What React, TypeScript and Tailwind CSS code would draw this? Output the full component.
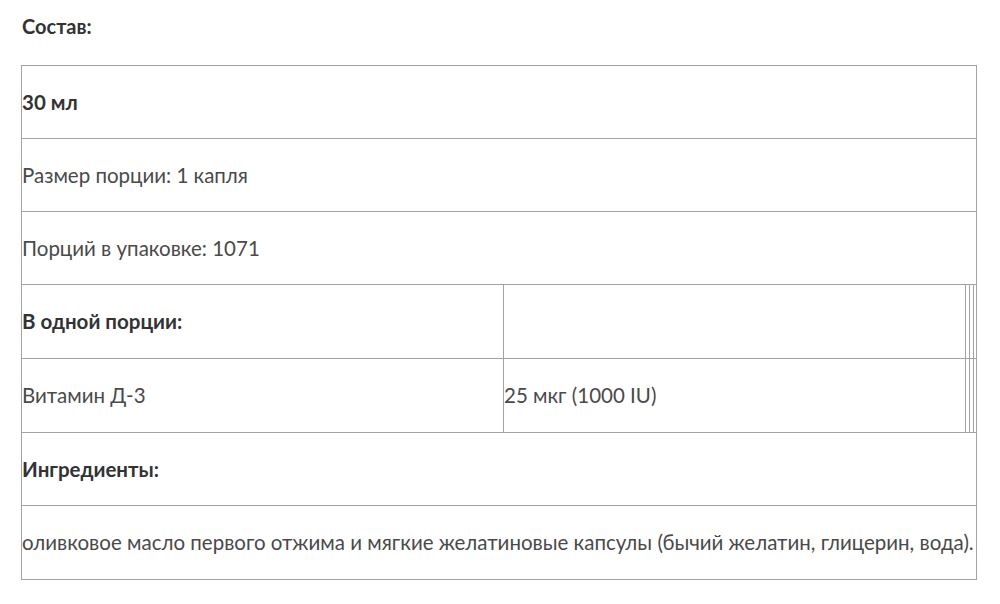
import React from "react";

const cell = "flex items-center h-[73px] text-[20.5px] text-[#4a4a4a]";

const Narrow: React.FC = () => (
  <>
    <div className="w-[4px] border-l border-[#a3a3a3]" />
    <div className="w-[4px] border-l border-[#a3a3a3]" />
    <div className="w-[3px] border-l border-[#a3a3a3]" />
  </>
);

const App: React.FC = () => {
  return (
    <div className="bg-white min-h-[604px] pl-[21px] pt-[12px] font-['Lato','Noto_Sans',sans-serif]">
      <p className="font-bold text-[20px] text-[#333] leading-[28px] pl-[1px]">Состав:</p>
      <div className="mt-[25px] w-[956px] border border-[#a3a3a3]">
        <div className={`${cell} border-b border-[#a3a3a3] font-bold text-[#333]`}>30 мл</div>
        <div className={`${cell} border-b border-[#a3a3a3]`}>Размер порции: 1 капля</div>
        <div className={`${cell} border-b border-[#a3a3a3]`}>Порций в упаковке: 1071</div>
        <div className="flex border-b border-[#a3a3a3]">
          <div className={`${cell} w-[482px] border-r border-[#a3a3a3] font-bold text-[#333]`}>
            В одной порции:
          </div>
          <div className={`${cell} flex-1`} />
          <Narrow />
        </div>
        <div className="flex border-b border-[#a3a3a3]">
          <div className={`${cell} w-[482px] border-r border-[#a3a3a3]`}>Витамин Д-3</div>
          <div className={`${cell} flex-1`}>25 мкг (1000 IU)</div>
          <Narrow />
        </div>
        <div className={`${cell} border-b border-[#a3a3a3] font-bold text-[#333]`}>Ингредиенты:</div>
        <div className={`${cell} whitespace-nowrap`}>
          оливковое масло первого отжима и мягкие желатиновые капсулы (бычий желатин, глицерин, вода).
        </div>
      </div>
    </div>
  );
};

export default App;
